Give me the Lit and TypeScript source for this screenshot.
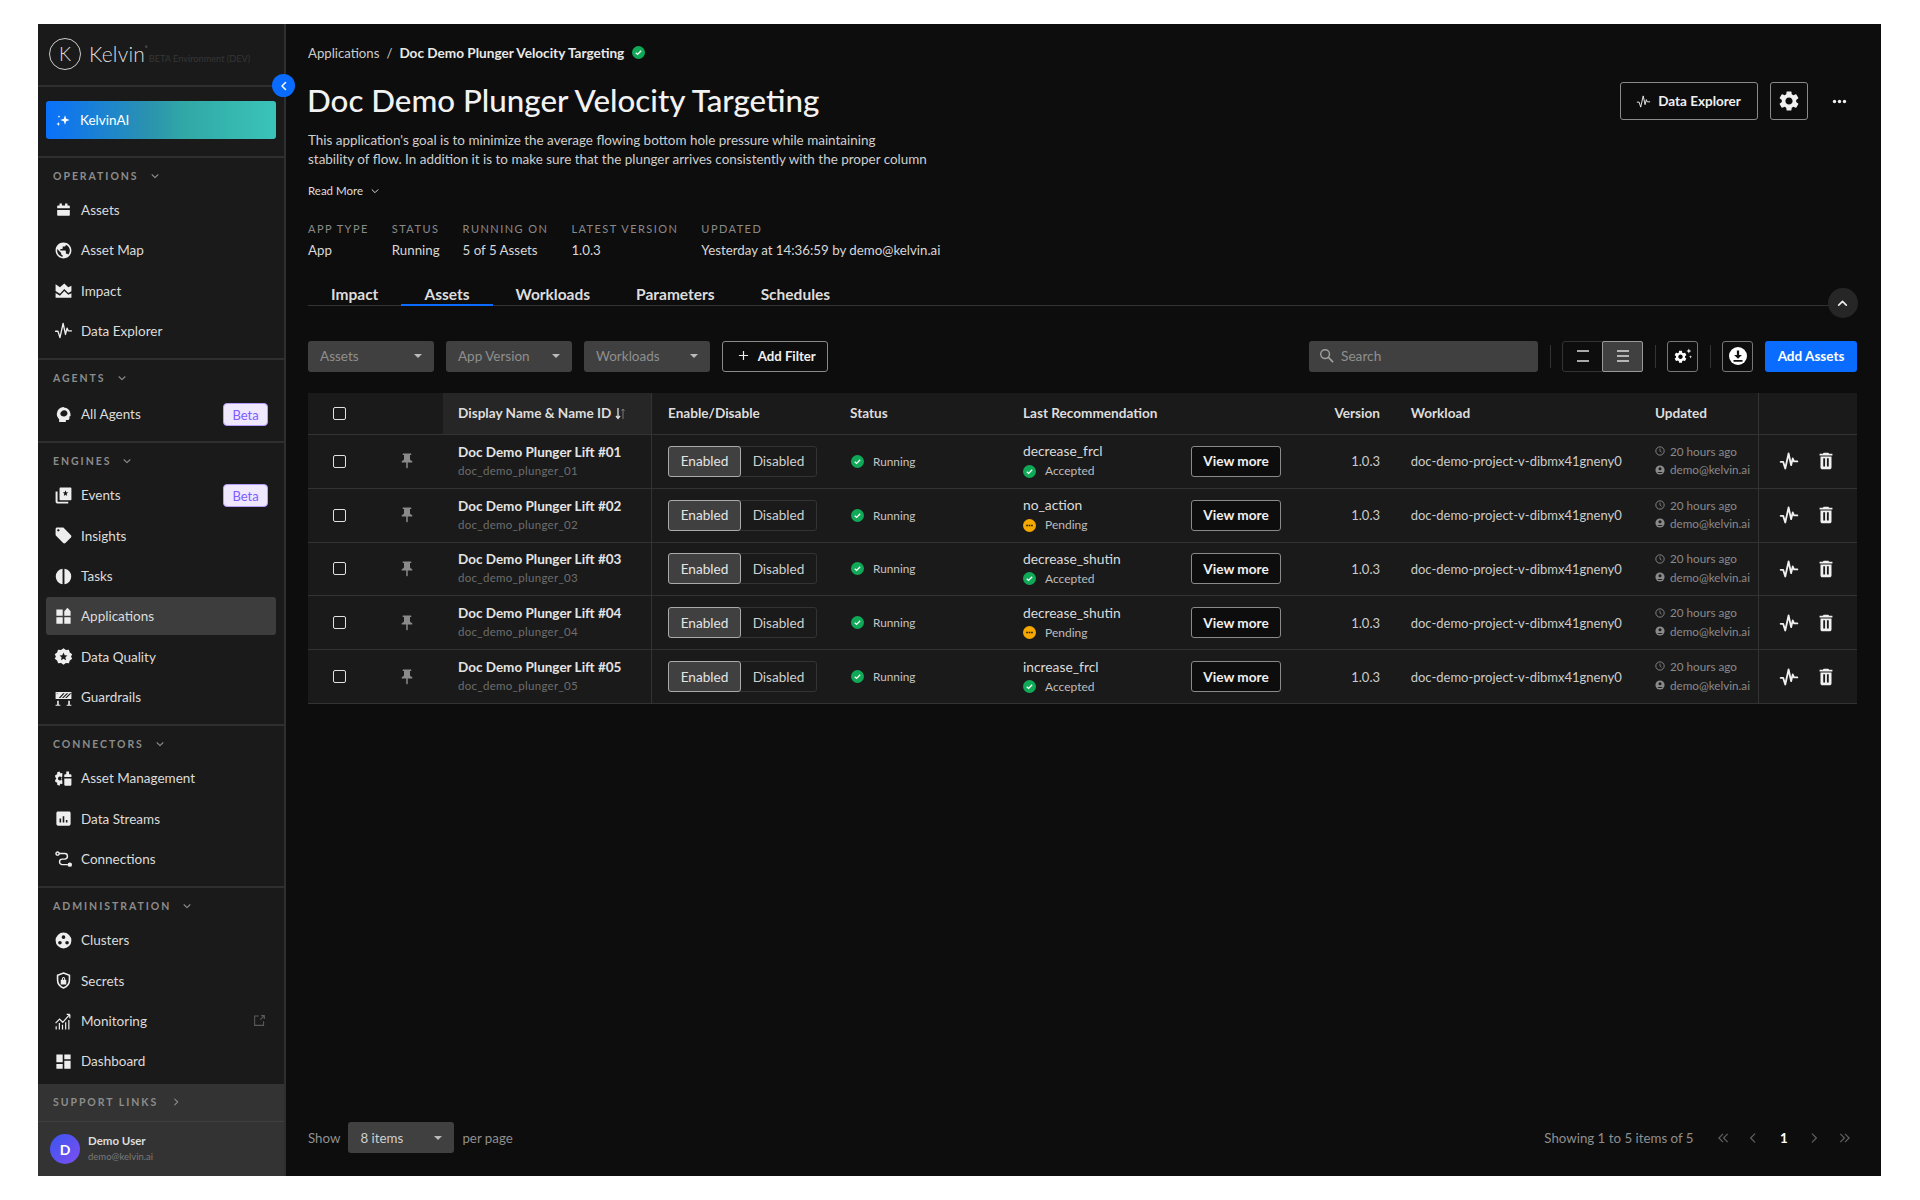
import { LitElement, html, css } from "lit";
import { customElement } from "lit/decorators.js";

const m = (d: string, size = 16, rule = "nonzero") => html`<svg class="ic" width=${size} height=${size} viewBox="0 0 24 24"><path fill="currentColor" fill-rule=${rule} d=${d}></path></svg>`;
const GEAR = "M19.14 12.94c.04-.3.06-.61.06-.94 0-.32-.02-.64-.07-.94l2.03-1.58c.18-.14.23-.41.12-.61l-1.92-3.32c-.12-.22-.37-.29-.59-.22l-2.39.96c-.5-.38-1.03-.7-1.62-.94l-.36-2.54c-.04-.24-.24-.41-.48-.41h-3.84c-.24 0-.43.17-.47.41l-.36 2.54c-.59.24-1.13.57-1.62.94l-2.39-.96c-.22-.08-.47 0-.59.22L2.74 8.87c-.12.21-.08.47.12.61l2.03 1.58c-.05.3-.09.63-.09.94s.02.64.07.94l-2.03 1.58c-.18.14-.23.41-.12.61l1.92 3.32c.12.22.37.29.59.22l2.39-.96c.5.38 1.03.7 1.62.94l.36 2.54c.05.24.24.41.48.41h3.84c.24 0 .44-.17.47-.41l.36-2.54c.59-.24 1.13-.56 1.62-.94l2.39.96c.22.08.47 0 .59-.22l1.92-3.32c.12-.22.07-.47-.12-.61l-2.01-1.58zM12 15.6c-1.98 0-3.6-1.62-3.6-3.6s1.62-3.6 3.6-3.6 3.6 1.62 3.6 3.6-1.62 3.6-3.6 3.6z";
const PULSE = (size = 18, w = 1.6) => html`<svg class="ic" width=${size} height=${size} viewBox="0 0 24 24"><path fill="none" stroke="currentColor" stroke-width=${w} stroke-linejoin="round" stroke-linecap="round" d="M2 13h3l2.500 8L11.500 3l3 14 2-8 1.500 3.500h4"></path></svg>`;
const chev = (dir: "down" | "up" | "left" | "right", size = 12, w = 2) => {
  const d = { down: "M5 9l7 7 7-7", up: "M5 15l7-7 7 7", left: "M15 5l-7 7 7 7", right: "M9 5l7 7-7 7" }[dir];
  return html`<svg class="ic" width=${size} height=${size} viewBox="0 0 24 24"><path fill="none" stroke="currentColor" stroke-width=${w} stroke-linecap="round" stroke-linejoin="round" d=${d}></path></svg>`;
};
const dbl = (dir: "l" | "r") => html`<svg class="ic" width="14" height="14" viewBox="0 0 24 24"><path fill="none" stroke="currentColor" stroke-width="2.200" d=${dir === "l" ? "M12 5l-7 7 7 7M20 5l-7 7 7 7" : "M4 5l7 7-7 7M12 5l7 7-7 7"}></path></svg>`;
const check = (size = 13) => html`<svg class="ic" width=${size} height=${size} viewBox="0 0 16 16"><circle cx="8" cy="8" r="8" fill="#0fa958"></circle><path d="M4.600 8.200l2.300 2.200 4.400-4.600" fill="none" stroke="#fff" stroke-width="1.600"></path></svg>`;
const pending = html`<svg class="ic" width="13" height="13" viewBox="0 0 16 16"><circle cx="8" cy="8" r="8" fill="#f5a800"></circle><path d="M4 7h2v2H4zM7 7h2v2H7zM10 7h2v2h-2z" fill="#1a1a1a"></path></svg>`;

const icons: Record<string, unknown> = {
  assets: m("M4 10.500V8c0-.6.4-1 1-1h2V4.500h3V7h4V4.500h3V7h2c.6 0 1 .4 1 1v2.500zM4 12.500h16V19c0 .6-.4 1-1 1H5c-.6 0-1-.4-1-1z", 19),
  map: m("M12 2C6.480 2 2 6.480 2 12s4.480 10 10 10 10-4.480 10-10S17.520 2 12 2zm-1 17.930c-3.950-.49-7-3.850-7-7.930 0-.62.08-1.210.21-1.790L9 15v1c0 1.100.9 2 2 2v1.930zm6.900-2.540c-.26-.81-1-1.390-1.900-1.390h-1v-3c0-.55-.45-1-1-1H8v-2h2c.55 0 1-.45 1-1V7h2c1.100 0 2-.9 2-2v-.41c2.930 1.190 5 4.060 5 7.410 0 2.080-.8 3.970-2.100 5.390z", 19),
  impact: m("M2 21V4l5.500 4L13 3l5 5 4-2v7l-4 2-5-5-5.500 6L2 12.500V15l5.500 3.500 5.500-6 5 5 4-2V21z", 19),
  pulse: PULSE(19, 1.700),
  agents: m("M12.500 2.500a9 9 0 0 0-9 9c0 2.600 1.200 4.800 3 6.400v3.600h8.500V19h2.500c1.100 0 2-.9 2-2v-2.500l1.500-.7-.3-3.300a9 9 0 0 0-8.200-7.500zM13 6.500c2.500 0 4 1.800 4 4s-2 4-4.500 4-4.500-1.300-4.500-3.500 2.500-4.500 5-4.500z", 19, "evenodd"),
  events: m("M8 2h13c.6 0 1 .4 1 1v14c0 .6-.4 1-1 1H8c-.6 0-1-.4-1-1V3c0-.6.4-1 1-1zm6.500 3.500l-1 2.500-2.500.2 2 1.700-.6 2.600 2.100-1.400 2.100 1.400-.6-2.600 2-1.700-2.500-.2zM2 7h2.500v13H18v2H4c-1.100 0-2-.9-2-2z", 19, "evenodd"),
  insights: m("M21.410 11.580l-9-9C12.050 2.220 11.550 2 11 2H4c-1.100 0-2 .9-2 2v7c0 .55.22 1.050.59 1.420l9 9c.36.36.86.58 1.410.58.55 0 1.050-.22 1.410-.59l7-7c.37-.36.59-.86.59-1.410 0-.55-.23-1.060-.59-1.420zM5.500 7C4.670 7 4 6.330 4 5.500S4.670 4 5.500 4 7 4.670 7 5.500 6.330 7 5.500 7z", 19),
  tasks: m("M10.800 2.100v19.800a10 10 0 0 1 0-19.800zM13.200 2.100a10 10 0 0 1 0 19.800z", 19),
  apps: m("M13 13v8h8v-8h-8zM3 21h8v-8H3v8zM3 3v8h8V3H3zm14-2l-4 4.500V11h8V5.500z", 19),
  quality: m("M12 1.500l3 2.300 3.800-.4 1.200 3.600 3 2.300-1.500 2.700 1.500 2.700-3 2.300-1.200 3.600-3.800-.4-3 2.300-3-2.300-3.800.4L3.900 17l-3-2.300L2.400 12 .9 9.300l3-2.300 1.200-3.600 3.800.4zM12 7l-1.500 3.300-3.500.4 2.600 2.400-.7 3.500L12 14.800l3.100 1.800-.7-3.500 2.600-2.400-3.500-.4z", 19, "evenodd"),
  guardrails: m("M2 5h20v9H2zM3.500 6.500l-.001 1.500 1.500-1.500zM6 12.500h2L13.500 6.500h-2zM10 12.500h2l6-6h-2zM14 12.500h2l6-6h-2zM4 16h2v5h2v1.500H2V21h2zM18 16h2v5h2v1.500h-6V21h2z", 19, "evenodd"),
  mgmt: html`<svg class="ic" width="19" height="19" viewBox="0 0 24 24"><path fill="currentColor" d="M7 3l1 2.500 2.500-.5v4.500L9 10.500v3l1.500 1v4.500L8 18.500 7 21l-3-1V17.500l-2.500-1.500 0-2L3 12 1.500 10l0-2L4 6.500V4zM7.500 9.500A2.500 2.500 0 1 0 7.500 14.500 2.500 2.500 0 0 0 7.500 9.500z" fill-rule="evenodd"></path><path fill="currentColor" d="M13 10V7.500c0-.5.4-1 1-1h1.500V3h3.500v3.500H21c.6 0 1 .5 1 1V10zM13 12h9v8c0 .6-.4 1-1 1h-7c-.6 0-1-.4-1-1z"></path></svg>`,
  streams: m("M19 3H5c-1.100 0-2 .9-2 2v14c0 1.100.9 2 2 2h14c1.100 0 2-.9 2-2V5c0-1.100-.9-2-2-2zM9 17H7v-5h2v5zm4 0h-2V9h2v8zm4 0h-2v-3h2v3z", 19),
  connections: html`<svg class="ic" width="19" height="19" viewBox="0 0 24 24"><circle cx="4.500" cy="4.500" r="2" fill="none" stroke="currentColor" stroke-width="1.800"></circle><path fill="none" stroke="currentColor" stroke-width="1.800" d="M6.500 4.500h7a3.500 3.500 0 0 1 0 7h-3a3.500 3.500 0 0 0 0 7h7"></path><circle cx="20" cy="18.500" r="2.800" fill="currentColor"></circle></svg>`,
  clusters: m("M12 2a10 10 0 1 0 0 20 10 10 0 0 0 0-20zm0 3.500a2.300 2.300 0 1 1 0 4.600 2.300 2.300 0 0 1 0-4.600zM7.500 12.500a2.300 2.300 0 1 1 0 4.600 2.300 2.300 0 0 1 0-4.600zm9 0a2.300 2.300 0 1 1 0 4.600 2.300 2.300 0 0 1 0-4.600z", 19, "evenodd"),
  secrets: html`<svg class="ic" width="19" height="19" viewBox="0 0 24 24"><path fill="none" stroke="currentColor" stroke-width="2" d="M12 2.500l7.500 3v6c0 4.800-3 8.500-7.500 10-4.500-1.500-7.500-5.200-7.500-10v-6z"></path><path fill="currentColor" d="M8.500 11h7v6h-7zM10 11V9.500a2 2 0 0 1 4 0V11h-1.200V9.500a.8.8 0 0 0-1.600 0V11z"></path></svg>`,
  monitoring: html`<svg class="ic" width="19" height="19" viewBox="0 0 24 24"><path fill="none" stroke="currentColor" stroke-width="1.500" d="M2 14l5-5 4 4 9-10M20 3v5M20 3h-4"></path><path fill="currentColor" d="M2 18h1.500v4H2zM6 14h1.500v8H6zM10 16h1.500v6H10zM14 13h1.500v9H14zM18 10h1.500v12H18z"></path></svg>`,
  dashboard: m("M3 13h8V3H3v10zm0 8h8v-6H3v6zm10 0h8V11h-8v10zm0-18v6h8V3h-8z", 19),
};

const GROUPS = [
  { label: "OPERATIONS", items: [["assets", "Assets"], ["map", "Asset Map"], ["impact", "Impact"], ["pulse", "Data Explorer"]] },
  { label: "AGENTS", tall: true, items: [["agents", "All Agents", "beta"]] },
  { label: "ENGINES", items: [["events", "Events", "beta"], ["insights", "Insights"], ["tasks", "Tasks"], ["apps", "Applications", "active"], ["quality", "Data Quality"], ["guardrails", "Guardrails"]] },
  { label: "CONNECTORS", items: [["mgmt", "Asset Management"], ["streams", "Data Streams"], ["connections", "Connections"]] },
  { label: "ADMINISTRATION", last: true, items: [["clusters", "Clusters"], ["secrets", "Secrets"], ["monitoring", "Monitoring", "ext"], ["dashboard", "Dashboard"]] },
];
const ROWS = [
  ["01", "decrease_frcl", "Accepted"],
  ["02", "no_action", "Pending"],
  ["03", "decrease_shutin", "Accepted"],
  ["04", "decrease_shutin", "Pending"],
  ["05", "increase_frcl", "Accepted"],
];

@customElement("app-root")
export class AppRoot extends LitElement {
  static styles = css`
    :host { display: block; height: 1200px; background: #fff; padding: 24px 39px 24px 38px; box-sizing: border-box; font-family: Lato, "Liberation Sans", sans-serif; color: #e6e6e6; }
    * { box-sizing: border-box; }
    .ic { display: block; flex: none; }
    .app { display: flex; height: 1152px; background: #0d0d0d; position: relative; overflow: hidden; }
    .side { width: 248px; flex: none; background: #1a1a1a; border-right: 2px solid #2f2f2f; display: flex; flex-direction: column; position: relative; }
    .side > * { flex: none; }
    .logo { height: 63px; border-bottom: 2px solid #2f2f2f; display: flex; align-items: center; padding: 0 0 2px 11px; }
    .mark { width: 32px; height: 32px; border-radius: 50%; border: 1.300px solid #ccc; display: flex; align-items: center; justify-content: center; font-size: 19px; font-weight: 300; color: #ddd; margin-right: 8px; }
    .word { font-size: 21px; font-weight: 300; color: #ddd; letter-spacing: .2px; }
    .word sup { font-size: 6px; vertical-align: 12px; line-height: 0; }
    .env { font-size: 9.200px; color: #363636; margin: 9px 0 0 1px; white-space: nowrap; }
    .side > .collapse { position: absolute; left: 234px; top: 50px; width: 23px; height: 23px; border-radius: 50%; background: #0a6cff; display: flex; align-items: center; justify-content: center; color: #fff; z-index: 2; }
    .ai-wrap { padding: 14px 8px 15px; height: 68.700px; }
    .ai { height: 38px; border-radius: 3px; background: linear-gradient(90deg, #0a70fb 0%, #2b93ae 45%, #31a8a6 60%, #3ac4b9 100%); display: flex; align-items: center; padding-left: 9px; gap: 9px; font-size: 13.500px; color: #fff; }
    .group { border-top: 2px solid #2f2f2f; padding-bottom: 7px; }
    .group.last { padding-bottom: 1.500px; }
    .glabel { height: 32px; display: flex; align-items: flex-start; padding: 12px 0 0 15px; gap: 11px; font-size: 10.500px; line-height: 12px; font-weight: 700; letter-spacing: 1.950px; color: #8c8c8c; }
    .glabel .ic { margin-top: 1px; }
    .group.tall .glabel { height: 34px; }
    .item { height: 40.330px; margin: 0 8px; padding-left: 8px; display: flex; align-items: center; border-radius: 3px; font-size: 13.500px; color: #dcdcdc; position: relative; }
    .item .ic { color: #eee; }
    .item span.t { margin-left: 8px; }
    .item.active { background: #3d3d3d; height: 38px; margin-top: 1.160px; margin-bottom: 1.170px; }
    .beta { position: absolute; right: 8px; top: 9px; width: 45px; height: 23px; background: #efe8ff; border: 1px solid #b59dff; border-radius: 4px; color: #7d5cff; font-size: 13px; display: flex; align-items: center; justify-content: center; }
    .item .ext { position: absolute; right: 10px; top: 13px; color: #5a5a5a; }
    .support { background: #333; margin-top: auto; }
    .sl { height: 38.500px; display: flex; align-items: center; padding-left: 15px; gap: 13px; font-size: 10.500px; font-weight: 700; letter-spacing: 1.950px; color: #8c8c8c; border-bottom: 1px solid #3f3f3f; }
    .user { height: 54px; display: flex; align-items: center; padding-left: 12px; gap: 8px; }
    .av { width: 30px; height: 30px; border-radius: 50%; background: linear-gradient(135deg, #3b55f0, #7d4ff0); display: flex; align-items: center; justify-content: center; color: #fff; font-weight: 700; font-size: 14px; }
    .un { font-size: 11.500px; font-weight: 700; color: #ddd; line-height: 16px; }
    .ue { font-size: 9.500px; color: #7a7a7a; line-height: 16px; }

    .main { flex: 1; min-width: 0; padding: 0 24px 0 22px; display: flex; flex-direction: column; position: relative; }
    .crumb { height: 20px; margin-top: 18.500px; display: flex; align-items: center; font-size: 13.200px; color: #ccc; }
    .crumb .sep { margin: 0 7px; }
    .crumb b { font-weight: 700; color: #e8e8e8; margin-right: 8px; font-size: 13.600px; }
    .title-row { display: flex; align-items: center; height: 40px; margin-top: 18.500px; }
    h1 { font-size: 31.300px; font-weight: 500; margin: -2.500px 0 0 -1px; color: #f2f2f2; flex: 1; white-space: nowrap; }
    .btn { height: 38px; border: 1px solid #8a8a8a; border-radius: 3px; display: flex; align-items: center; justify-content: center; background: #0d0d0d; color: #f0f0f0; font-weight: 700; font-size: 13.500px; gap: 7px; }
    .de { width: 138px; }
    .gear { width: 38.500px; margin-left: 12px; }
    .dots { margin: 0 10.500px 0 23.500px; }
    .desc { font-size: 13.460px; line-height: 19.500px; color: #cfcfcf; margin-top: 9.700px; white-space: nowrap; }
    .read { display: flex; align-items: center; font-size: 11.500px; margin-top: 11.300px; height: 20px; gap: 7px; color: #ddd; }
    .meta { display: flex; margin-top: 19px; }
    .meta > div { margin-right: 23px; }
    .meta .k { font-size: 11px; letter-spacing: 1.450px; color: #8a8a8a; line-height: 18px; white-space: nowrap; }
    .meta .v { font-size: 13.300px; color: #d8d8d8; line-height: 24px; white-space: nowrap; }
    .tabs { display: flex; height: 33px; margin-top: 11.500px; border-bottom: 1.500px solid #333; margin-right: 5px; flex: none; }
    .tab { padding: 12px 23px 0; font-size: 15.500px; line-height: 18.500px; font-weight: 700; color: #ddd; height: 33px; }
    .tab.on { border-bottom: 2px solid #0a6cff; }
    .up { position: absolute; left: 1541.700px; top: 264px; width: 30px; height: 30px; border-radius: 50%; background: #262626; display: flex; align-items: center; justify-content: center; color: #eee; }
    .bar { display: flex; align-items: center; height: 31px; margin-top: 34.500px; flex: none; }
    .sel { width: 126px; height: 31px; background: #404040; border-radius: 3px; display: flex; align-items: center; padding: 0 12px 1px; font-size: 13.500px; color: #8f8f8f; margin-right: 12px; justify-content: space-between; }
    .caret { width: 0; height: 0; border-left: 4px solid transparent; border-right: 4px solid transparent; border-top: 4px solid #bbb; }
    .addf { width: 105.500px; height: 31px; font-size: 13.200px; border-width: 1px; gap: 9px; padding: 0 0 1px 4px; }
    .search { margin-left: auto; width: 229px; height: 31px; background: #404040; border-radius: 3px; display: flex; align-items: center; padding: 0 0 1px 10px; gap: 7px; color: #8f8f8f; font-size: 13.700px; }
    .vline { width: 1px; height: 23px; background: #333; margin: 0 11.500px; }
    .vt { display: flex; width: 81px; height: 31px; border: 1px solid #333; border-radius: 3px; }
    .vt span { flex: 1; display: flex; align-items: center; justify-content: center; }
    .vt .on { background: #404040; border: 1px solid #999; border-radius: 2px; margin: -1px -1px -1px 0; }
    .sq { width: 31px; height: 31px; border-color: #777; }
    .add { width: 92px; height: 31px; background: #0a6cff; border-radius: 3px; color: #fff; font-weight: 700; font-size: 13.500px; padding-bottom: 1px; display: flex; align-items: center; justify-content: center; margin-left: 12px; }

    .table { margin-top: 20.700px; }
    .tr { display: grid; grid-template-columns: 62px 73px 209px 186px 173px 289px 98.700px 244.300px 115px 99px; height: 53.800px; background: #1a1a1a; border-bottom: 1.500px solid #333; align-items: stretch; }
    .tr.head { height: 42.300px; font-size: 13.600px; font-weight: 700; color: #ddd; }
    .c { display: flex; align-items: center; padding-left: 12px; min-width: 0; }
    .c.cc { justify-content: center; padding: 0; }
    .c.name { padding-left: 15px; border-right: 1.500px solid #333; flex-direction: column; align-items: flex-start; justify-content: center; }
    .head .c.name { background: #262626; flex-direction: row; align-items: center; justify-content: flex-start; gap: 4px; }
    .c.tgc { padding-left: 16px; }
    .cb { width: 13px; height: 13px; border: 1.500px solid #e0e0e0; border-radius: 2px; }
    .pin { color: #8a8a8a; }
    .n1 { font-size: 13.500px; font-weight: 700; color: #e4e4e4; line-height: 18px; }
    .n2 { font-size: 11.500px; letter-spacing: .3px; color: #6e6e6e; line-height: 19px; }
    .tg { display: flex; width: 149px; height: 31px; border: 1px solid #333; border-radius: 3px; font-size: 13.600px; color: #cfcfcf; }
    .tg span { display: flex; align-items: center; justify-content: center; }
    .tg .e { width: 73px; background: #404040; border: 1px solid #aaa; border-radius: 3px; margin: -1px 0 -1px -1px; color: #e4e4e4; }
    .tg .d { flex: 1; }
    .st { gap: 9px; font-size: 11.800px; color: #c4c4c4; padding-left: 13px; }
    .rec { justify-content: space-between; padding-right: 19px; }
    .r1 { font-size: 13.800px; color: #dcdcdc; line-height: 20px; }
    .r2 { display: flex; align-items: center; gap: 9px; font-size: 12px; color: #bdbdbd; line-height: 20px; }
    .vm { width: 90px; height: 31px; font-size: 13.600px; }
    .ver { justify-content: flex-end; padding: 0 18.700px 0 0; font-size: 13px; color: #ccc; }
    .head .ver { font-size: 13.600px; font-weight: 700; color: #ddd; }
    .wl { font-size: 13px; color: #ccc; white-space: nowrap; }
    .up2 { flex-direction: column; align-items: flex-start; justify-content: center; font-size: 11.700px; color: #8a8a8a; padding-bottom: 2px; }
    .up2 div { display: flex; align-items: center; gap: 5px; line-height: 18.500px; white-space: nowrap; }
    .act { gap: 16px; justify-content: center; color: #f0f0f0; padding: 0; border-left: 1.500px solid #333; }
    .foot { margin-top: auto; height: 31px; margin-bottom: 23px; display: flex; align-items: center; font-size: 13.300px; color: #8f8f8f; }
    .fs { width: 106px; height: 31px; background: #404040; border-radius: 3px; margin: 0 8px; display: flex; align-items: center; justify-content: space-between; padding: 0 12px; color: #cfcfcf; }
    .pg { margin-left: auto; margin-right: -3px; display: flex; align-items: center; color: #5e5e5e; }
    .pg .info { color: #8f8f8f; margin-right: 14px; }
    .pg .p { width: 30.500px; display: flex; justify-content: center; }
    .pg .cur { color: #fff; font-weight: 700; }
  `;

  private sideItem(it: string[]) {
    const flag = it[2];
    return html`<div class="item ${flag === "active" ? "active" : ""}">
      ${icons[it[0]]}<span class="t">${it[1]}</span>
      ${flag === "beta" ? html`<span class="beta">Beta</span>` : ""}
      ${flag === "ext" ? html`<svg class="ic ext" width="13" height="13" viewBox="0 0 16 16"><path fill="none" stroke="currentColor" stroke-width="1.300" d="M7 2.500H2v11.500h11V9M9 7l5-5M10 2h4v4"></path></svg>` : ""}
    </div>`;
  }

  render() {
    return html`<div class="app">
      <aside class="side">
        <div class="logo"><span class="mark">K</span><span class="word">Kelvin<sup>°</sup></span><span class="env">BETA Environment (DEV)</span></div>
        <div class="collapse">${chev("left", 12, 3)}</div>
        <div class="ai-wrap"><div class="ai">
          <svg class="ic" width="16" height="16" viewBox="0 0 24 24"><path fill="#fff" d="M15 5l1.800 5.200L22 12l-5.200 1.800L15 19l-1.800-5.200L8 12l5.200-1.800zM5 15l.9 2.100L8 18l-2.100.9L5 21l-.9-2.100L2 18l2.100-.9zM6 5l.6 1.400L8 7l-1.400.6L6 9l-.6-1.400L4 7l1.400-.6z"></path></svg>
          KelvinAI</div></div>
        ${GROUPS.map((g) => html`<div class="group ${g.tall ? "tall" : ""} ${g.last ? "last" : ""}">
          <div class="glabel">${g.label}${chev("down", 10, 2.600)}</div>
          ${g.items.map((i) => this.sideItem(i))}
        </div>`)}
        <div class="support">
          <div class="sl">SUPPORT LINKS ${chev("right", 10, 2.600)}</div>
          <div class="user"><div class="av">D</div><div><div class="un">Demo User</div><div class="ue">demo@kelvin.ai</div></div></div>
        </div>
      </aside>
      <main class="main">
        <div class="crumb">Applications<span class="sep">/</span><b>Doc Demo Plunger Velocity Targeting</b>${check(13)}</div>
        <div class="title-row">
          <h1>Doc Demo Plunger Velocity Targeting</h1>
          <div class="btn de">${PULSE(15, 1.500)}Data Explorer</div>
          <div class="btn gear">${m(GEAR, 24)}</div>
          <svg class="ic dots" width="15" height="15" viewBox="0 0 15 15"><circle cx="2.500" cy="7.500" r="1.700" fill="#eee"></circle><circle cx="7.500" cy="7.500" r="1.700" fill="#eee"></circle><circle cx="12.500" cy="7.500" r="1.700" fill="#eee"></circle></svg>
        </div>
        <div class="desc">This application's goal is to minimize the average flowing bottom hole pressure while maintaining<br>stability of flow. In addition it is to make sure that the plunger arrives consistently with the proper column</div>
        <div class="read">Read More ${chev("down", 10, 2.400)}</div>
        <div class="meta">
          <div><div class="k">APP TYPE</div><div class="v">App</div></div>
          <div><div class="k">STATUS</div><div class="v">Running</div></div>
          <div><div class="k">RUNNING ON</div><div class="v">5 of 5 Assets</div></div>
          <div><div class="k">LATEST VERSION</div><div class="v">1.0.3</div></div>
          <div><div class="k">UPDATED</div><div class="v">Yesterday at 14:36:59 by demo@kelvin.ai</div></div>
        </div>
        <div class="tabs">${["Impact", "Assets", "Workloads", "Parameters", "Schedules"].map((t) => html`<div class="tab ${t === "Assets" ? "on" : ""}">${t}</div>`)}</div>
        <div class="up">${chev("up", 13, 3)}</div>
        <div class="bar">
          ${["Assets", "App Version", "Workloads"].map((s) => html`<div class="sel">${s}<i class="caret"></i></div>`)}
          <div class="btn addf"><svg class="ic" width="11" height="11" viewBox="0 0 12 12"><path d="M6 1v10M1 6h10" stroke="#eee" stroke-width="1.300"></path></svg>Add Filter</div>
          <div class="search"><svg class="ic" width="15" height="15" viewBox="0 0 16 16"><circle cx="6.500" cy="6.500" r="4.700" fill="none" stroke="#a0a0a0" stroke-width="1.500"></circle><path d="M10 10l5 5" stroke="#a0a0a0" stroke-width="1.700"></path></svg>Search</div>
          <i class="vline"></i>
          <div class="vt"><span><svg width="14" height="14" viewBox="0 0 14 14"><path d="M1 2h12M1 12h12" stroke="#ddd" stroke-width="1.300"></path></svg></span><span class="on"><svg width="14" height="14" viewBox="0 0 14 14"><path d="M1 2h12M1 7h12M1 12h12" stroke="#ddd" stroke-width="1.300"></path></svg></span></div>
          <i class="vline"></i>
          <div class="btn sq"><svg class="ic" width="20" height="20" viewBox="0 0 24 24"><g transform="translate(0 4) scale(.75)"><path fill="#fff" d=${GEAR}></path></g><path fill="#fff" d="M19 3l.8 2.200L22 6l-2.200.8L19 9l-.8-2.200L16 6l2.200-.8zM21 11l.5 1.500L23 13l-1.500.5L21 15l-.5-1.500L19 13l1.500-.5z"></path></svg></div>
          <i class="vline"></i>
          <div class="btn sq"><svg class="ic" width="18" height="18" viewBox="0 0 16 16"><circle cx="8" cy="8" r="8" fill="#fff"></circle><path d="M7 3h2v4h2.500L8 10.500 4.500 7H7zM4 11.500h8V13H4z" fill="#111"></path></svg></div>
          <div class="add">Add Assets</div>
        </div>
        <div class="table">
          <div class="tr head">
            <div class="c cc"><i class="cb"></i></div><div class="c"></div>
            <div class="c name">Display Name &amp; Name ID <svg class="ic" width="11" height="13" viewBox="0 0 11 13"><path d="M3 1v10M1 9l2 2.500L5 9" fill="none" stroke="#ddd" stroke-width="1.300"></path><path d="M8 12V2M6.500 4L8 2l1.500 2" fill="none" stroke="#777" stroke-width="1"></path></svg></div>
            <div class="c tgc">Enable/Disable</div><div class="c">Status</div><div class="c">Last Recommendation</div>
            <div class="c ver">Version</div><div class="c">Workload</div><div class="c">Updated</div><div class="c act"></div>
          </div>
          ${ROWS.map((r) => html`<div class="tr">
            <div class="c cc"><i class="cb"></i></div>
            <div class="c cc pin">${m("M16 9V4h1c.55 0 1-.45 1-1s-.45-1-1-1H7c-.55 0-1 .45-1 1s.45 1 1 1h1v5c0 1.660-1.340 3-3 3v2h5.970v7l1 1 1-1v-7H19v-2c-1.660 0-3-1.340-3-3z", 18)}</div>
            <div class="c name"><div class="n1">Doc Demo Plunger Lift #${r[0]}</div><div class="n2">doc_demo_plunger_${r[0]}</div></div>
            <div class="c tgc"><div class="tg"><span class="e">Enabled</span><span class="d">Disabled</span></div></div>
            <div class="c st">${check()}Running</div>
            <div class="c rec"><div><div class="r1">${r[1]}</div><div class="r2">${r[2] === "Accepted" ? check() : pending}${r[2]}</div></div><div class="btn vm">View more</div></div>
            <div class="c ver">1.0.3</div>
            <div class="c wl">doc-demo-project-v-dibmx41gneny0</div>
            <div class="c up2">
              <div><svg class="ic" width="10" height="10" viewBox="0 0 12 12"><circle cx="6" cy="6" r="5" fill="none" stroke="#8a8a8a" stroke-width="1.100"></circle><path d="M6 3v3l2 1.500" fill="none" stroke="#8a8a8a"></path></svg>20 hours ago</div>
              <div><svg class="ic" width="10" height="10" viewBox="0 0 12 12"><circle cx="6" cy="6" r="5.500" fill="#8a8a8a"></circle><circle cx="6" cy="4.500" r="1.800" fill="#1a1a1a"></circle><path d="M2.800 9.500c.7-1.500 5.700-1.500 6.400 0z" fill="#1a1a1a"></path></svg>demo@kelvin.ai</div>
            </div>
            <div class="c act">${PULSE(20, 2.200)}${m("M6 19c0 1.100.9 2 2 2h8c1.100 0 2-.9 2-2V7H6v12zM19 4h-3.500l-1-1h-5l-1 1H5v2h14V4zM9 9h2v9H9zM13 9h2v9h-2z", 22, "evenodd")}</div>
          </div>`)}
        </div>
        <div class="foot">Show<div class="fs">8 items<i class="caret"></i></div>per page
          <div class="pg"><span class="info">Showing 1 to 5 items of 5</span>
            <span class="p">${dbl("l")}</span><span class="p">${chev("left", 14, 2.200)}</span><span class="p cur">1</span><span class="p">${chev("right", 14, 2.200)}</span><span class="p">${dbl("r")}</span>
          </div>
        </div>
      </main>
    </div>`;
  }
}
